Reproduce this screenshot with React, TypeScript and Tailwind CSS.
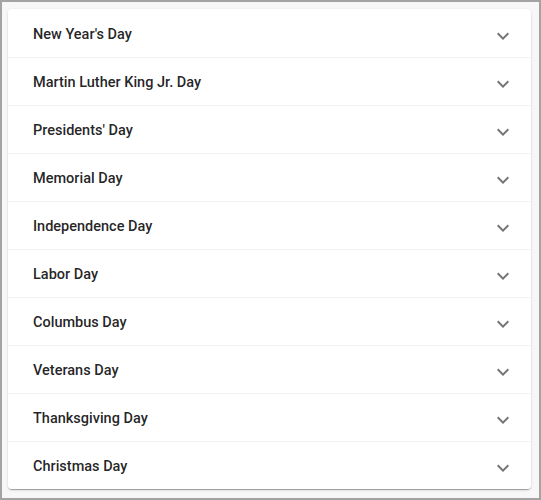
import React from 'react';

const holidays = [
    "New Year's Day",
    'Martin Luther King Jr. Day',
    "Presidents' Day",
    'Memorial Day',
    'Independence Day',
    'Labor Day',
    'Columbus Day',
    'Veterans Day',
    'Thanksgiving Day',
    'Christmas Day',
];

const ExpandIcon: React.FC = () => (
    <svg viewBox="0 0 24 24" className="h-6 w-6 text-[#757575]" fill="currentColor">
        <path d="M16.59 8.59 12 13.17 7.41 8.59 6 10l6 6 6-6z" />
    </svg>
);

const App: React.FC = () => {
    return (
        <div className="h-[500px] w-[541px] border-2 border-[#a3a3a3] bg-[#f7f7f7] pl-[6px] pr-[8px] pt-[7px] font-['Roboto',sans-serif]">
            <div className="rounded shadow-[0_2px_1px_-1px_rgba(0,0,0,0.2),0_1px_1px_0_rgba(0,0,0,0.14),0_1px_3px_0_rgba(0,0,0,0.12)]">
                {holidays.map((name, i) => (
                    <div
                        key={name}
                        className={`flex h-[48px] items-center justify-between bg-white pl-[25px] pr-[16px] ${i > 0 ? 'border-t border-[#f3f3f3]' : 'rounded-t pt-[1px]'} ${i === holidays.length - 1 ? 'rounded-b' : ''}`}
                    >
                        <span className="mt-[2px] text-[14.5px] font-medium text-[rgba(0,0,0,0.87)]">{name}</span>
                        <span className="mt-[5px]">
                            <ExpandIcon />
                        </span>
                    </div>
                ))}
            </div>
        </div>
    );
};

export default App;
